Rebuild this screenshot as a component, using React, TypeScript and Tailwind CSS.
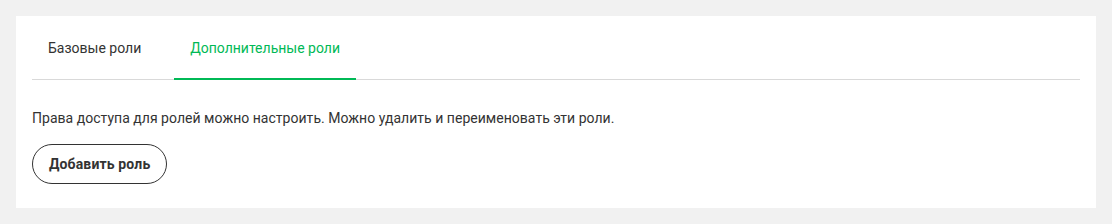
export default function App() {
  return (
    <div className="min-h-screen bg-[#f1f1f1] p-4 font-['Roboto',sans-serif]">
      <div className="bg-white px-4 pt-[22px] pb-6">
        {/* Tabs */}
        <div className="flex gap-[17px] border-b border-[#d9d9d9]">
          <button className="-mb-px border-b-2 border-transparent px-4 pb-5 text-sm leading-5 text-[#333333]">
            Базовые роли
          </button>
          <button className="-mb-px border-b-2 border-[#00b956] px-4 pb-5 text-sm leading-5 text-[#00b956]">
            Дополнительные роли
          </button>
        </div>

        <p className="mt-7 text-sm leading-5 tracking-[0.002em] text-[#333333]">
          Права доступа для ролей можно настроить. Можно удалить и переименовать эти роли.
        </p>

        <button className="mt-4 h-10 rounded-full border border-[#333333] px-4 text-sm font-bold tracking-[0.01em] text-[#333333]">
          Добавить роль
        </button>
      </div>
    </div>
  );
}
